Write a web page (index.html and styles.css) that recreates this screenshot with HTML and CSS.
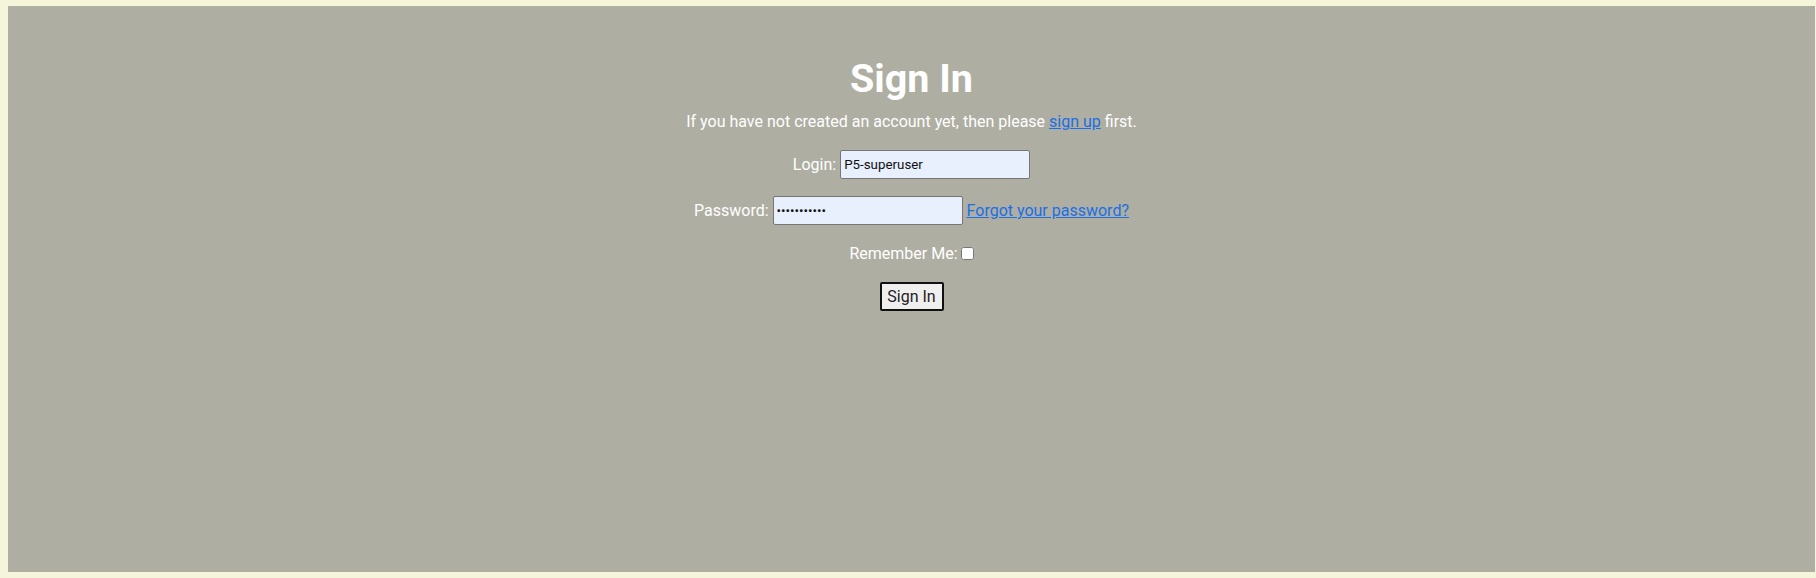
FILE: index.html
```html
<!DOCTYPE html>
<html lang="en">
<head>
<meta charset="utf-8">
<title>Sign In</title>
<link rel="stylesheet" href="styles.css">
</head>
<body>
<main class="panel">
  <h1 class="title">Sign In</h1>
  <p class="intro">If you have not created an account yet, then please <a href="#">sign up</a> first.</p>
  <form class="form">
    <div class="row">
      <label for="login">Login:</label>
      <input id="login" class="field" type="text" value="P5-superuser">
    </div>
    <div class="row">
      <label for="password">Password:</label>
      <input id="password" class="field" type="password" value="superuser12">
      <a href="#">Forgot your password?</a>
    </div>
    <div class="row row-remember">
      <label for="remember">Remember Me:</label>
      <input id="remember" class="check" type="checkbox">
    </div>
    <div class="row row-submit">
      <button type="submit" class="btn">Sign In</button>
    </div>
  </form>
</main>
</body>
</html>
```
FILE: styles.css
```css
html, body {
  background: #f5f5dc;
}
body {
  margin: 6px 1px 6px 8px;
  font-family: Roboto, "Liberation Sans", sans-serif;
  font-size: 16px;
  color: #ffffff;
}
.panel {
  background: #aeaea2;
  height: 566px;
  box-sizing: border-box;
  padding-top: 49px;
  text-align: center;
}
.title {
  margin: 0;
  font-size: 39.5px;
  font-weight: 700;
  line-height: 47px;
}
.intro {
  margin: 10px 0 0;
  line-height: 19px;
}
a {
  color: #1b6fe6;
  text-decoration: underline;
}
.form {
  display: flex;
  flex-direction: column;
  align-items: center;
}
.row {
  display: flex;
  align-items: center;
  justify-content: center;
  gap: 4px;
  line-height: 19px;
  margin-top: 19px;
}
.row + .row {
  margin-top: 17px;
}
.row.row-remember {
  margin-top: 19px;
  gap: 3px;
}
.row.row-submit {
  margin-top: 19px;
}
.field {
  box-sizing: border-box;
  width: 190px;
  height: 29px;
  margin: 0;
  padding: 1px 3px;
  border: 1px solid #767676;
  border-radius: 2px;
  background: #e8f0fe;
  color: #111;
  font-family: Roboto, "Liberation Sans", sans-serif;
  font-size: 13.33px;
}
.check {
  width: 13px;
  height: 13px;
  margin: 0;
}
.btn {
  box-sizing: border-box;
  width: 64px;
  height: 29px;
  padding: 0;
  border: 2px solid #111;
  border-radius: 2px;
  background: #efefef;
  color: #222;
  font-family: Roboto, "Liberation Sans", sans-serif;
  font-size: 16px;
}
```
